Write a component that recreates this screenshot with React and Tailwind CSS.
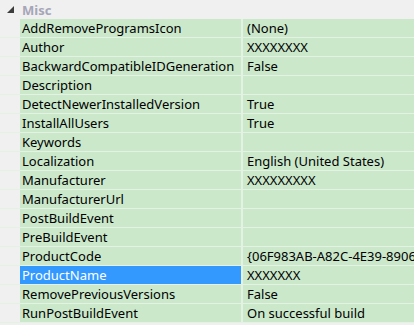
import React from 'react';

const rows = [
  ['AddRemoveProgramsIcon', '(None)'],
  ['Author', 'XXXXXXXX'],
  ['BackwardCompatibleIDGeneration', 'False'],
  ['Description', ''],
  ['DetectNewerInstalledVersion', 'True'],
  ['InstallAllUsers', 'True'],
  ['Keywords', ''],
  ['Localization', 'English (United States)'],
  ['Manufacturer', 'XXXXXXXXX'],
  ['ManufacturerUrl', ''],
  ['PostBuildEvent', ''],
  ['PreBuildEvent', ''],
  ['ProductCode', '{06F983AB-A82C-4E39-8906-4B1C2D3E5F60}'],
  ['ProductName', 'XXXXXXX'],
  ['RemovePreviousVersions', 'False'],
  ['RunPostBuildEvent', 'On successful build'],
];

export default function App() {
  return (
    <div className="w-[414px] h-[325px] overflow-hidden bg-[#f0f0f0] text-[13px] leading-[18px] text-black" style={{ fontFamily: '"Noto Sans", "Liberation Sans", sans-serif' }}>
      <div className="h-[19px] flex items-center">
        <div className="w-[20px] flex justify-center">
          <svg width="7" height="7" viewBox="0 0 7 7"><path d="M7 0 L7 7 L0 7 Z" fill="#3c3c3c" /></svg>
        </div>
        <span className="pl-[2px] font-bold text-[#a6a6b8]">Misc</span>
      </div>
      <div className="flex flex-col">
        {rows.map(([name, value]) => {
          const sel = name === 'ProductName';
          return (
            <div key={name} className="flex h-[19px] border-b border-[#e4f2e4]">
              <div className="w-[20px] shrink-0" />
              <div className={`w-[221px] shrink-0 pl-[2px] whitespace-nowrap overflow-hidden ${sel ? 'bg-[#3399ff] text-white' : 'bg-[#cbe8cb]'}`}>{name}</div>
              <div className="w-[2px] shrink-0 bg-[#e4f2e4]" />
              <div className="flex-1 bg-[#cbe8cb] pl-[4px] whitespace-nowrap overflow-hidden">{value}</div>
            </div>
          );
        })}
      </div>
    </div>
  );
}
